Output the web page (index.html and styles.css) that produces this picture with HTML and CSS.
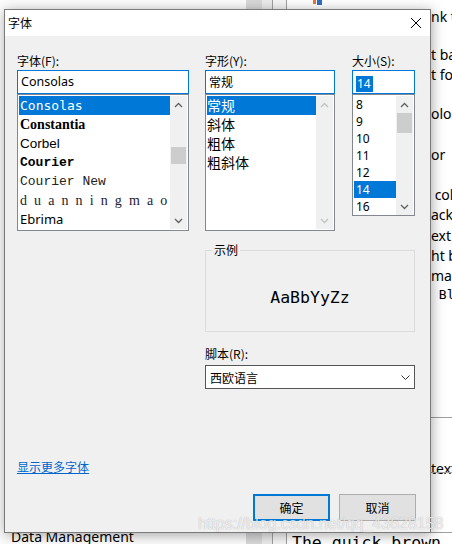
FILE: index.html
```html
<!DOCTYPE html>
<html lang="zh-CN">
<head>
<meta charset="utf-8">
<title>字体</title>
<link rel="stylesheet" href="styles.css">
</head>
<body>
<div class="desktop">
  <div class="app-left">
    <div class="tree-top">Label Decorations</div>
    <div class="tree-bottom">Data Management</div>
  </div>
  <div class="app-scroll"></div>
  <div class="app-gap"></div>
  <div class="app-mid"></div>
  <div class="app-right">
    <svg class="app-icon" width="12" height="5" viewBox="0 0 12 5"><rect x="0" y="0" width="3" height="4" fill="#e8782c"/><rect x="4" y="0" width="5" height="5" fill="#2f6fc4"/></svg>
    <div class="prop mt2">nk text color</div>
    <div class="prop mt18">t background</div>
    <div class="prop">t foreground</div>
    <div class="prop mt19">olor</div>
    <div class="prop mt21">or</div>
    <div class="prop mt20"> color</div>
    <div class="prop">ackground</div>
    <div class="prop mt1">ext color</div>
    <div class="prop">ht background</div>
    <div class="prop">matting</div>
    <div class="prop mono mtm1"> Block</div>
    <div class="rule-box">
      <div class="prop">text</div>
    </div>
    <div class="rule-box short"></div>
    <div class="preview">The quick brown fox</div>
  </div>
</div>

<div class="dialog">
  <div class="titlebar">
    <span class="title">字体</span>
    <svg class="close" width="12" height="12" viewBox="0 0 12 12"><path d="M1 1L11 11M11 1L1 11" stroke="#000" stroke-width="1" fill="none"/></svg>
  </div>
  <div class="dlg-body">
    <div class="grid">
      <div class="lbl col1">字体(F):</div>
      <div class="lbl col2">字形(Y):</div>
      <div class="lbl col3">大小(S):</div>

      <div class="input col1 latin">Consolas</div>
      <div class="input col2">常规</div>
      <div class="input col3"><span class="hl">14</span></div>

      <div class="list list-font col1">
        <div class="items">
          <div class="item sel f-consolas">Consolas</div>
          <div class="item f-constantia">Constantia</div>
          <div class="item f-corbel">Corbel</div>
          <div class="item f-courier">Courier</div>
          <div class="item f-couriernew">Courier New</div>
          <div class="item f-spaced">duanningmao</div>
          <div class="item f-ebrima">Ebrima</div>
        </div>
        <div class="vscroll">
          <div class="sb-btn"><svg class="chev" width="9" height="6" viewBox="0 0 9 6"><path d="M1 5L4.5 1.5L8 5"/></svg></div>
          <div class="sb-track"><div class="sb-thumb thumb-font"></div></div>
          <div class="sb-btn"><svg class="chev" width="9" height="6" viewBox="0 0 9 6"><path d="M1 1L4.5 4.5L8 1"/></svg></div>
        </div>
      </div>

      <div class="list list-style col2">
        <div class="items">
          <div class="item sel cjk">常规</div>
          <div class="item cjk">斜体</div>
          <div class="item cjk">粗体</div>
          <div class="item cjk">粗斜体</div>
        </div>
        <div class="vscroll">
          <div class="sb-btn"><svg class="chev off" width="9" height="6" viewBox="0 0 9 6"><path d="M1 5L4.5 1.5L8 5"/></svg></div>
          <div class="sb-track"></div>
          <div class="sb-btn"><svg class="chev off" width="9" height="6" viewBox="0 0 9 6"><path d="M1 1L4.5 4.5L8 1"/></svg></div>
        </div>
      </div>

      <div class="list list-size col3">
        <div class="items">
          <div class="item num">8</div>
          <div class="item num">9</div>
          <div class="item num">10</div>
          <div class="item num">11</div>
          <div class="item num">12</div>
          <div class="item num sel">14</div>
          <div class="item num">16</div>
        </div>
        <div class="vscroll">
          <div class="sb-btn"><svg class="chev" width="9" height="6" viewBox="0 0 9 6"><path d="M1 5L4.5 1.5L8 5"/></svg></div>
          <div class="sb-track"><div class="sb-thumb thumb-size"></div></div>
          <div class="sb-btn"><svg class="chev" width="9" height="6" viewBox="0 0 9 6"><path d="M1 1L4.5 4.5L8 1"/></svg></div>
        </div>
      </div>

      <div class="sample">
        <span class="sample-label">示例</span>
        <div class="sample-text">AaBbYyZz</div>
      </div>

      <div class="lbl script-lbl">脚本(R):</div>
      <div class="select">
        <span>西欧语言</span>
        <svg class="drop" width="9" height="5" viewBox="0 0 9 5"><path d="M0.5 0.5L4.5 4.5L8.5 0.5"/></svg>
      </div>
    </div>

    <a class="more" href="#">显示更多字体</a>

    <div class="buttons">
      <button class="btn btn-ok">确定</button>
      <button class="btn">取消</button>
    </div>
  </div>
</div>

<div class="watermark">https://blog.csdn.net/qq_43628158</div>
</body>
</html>
```

FILE: styles.css
```css
* { box-sizing: border-box; }
html, body { margin: 0; padding: 0; }
body {
  width: 452px;
  height: 544px;
  overflow: hidden;
  position: relative;
  background: #fff;
  color: #000;
  font-family: "Noto Sans", "Noto Sans CJK SC", sans-serif;
}

/* ---------- background application ---------- */
.desktop { display: flex; height: 544px; }
.app-left {
  width: 246px;
  background: #fcfcfc;
  display: flex;
  flex-direction: column;
  justify-content: space-between;
  font-size: 14px;
  line-height: 18px;
  white-space: nowrap;
  overflow: hidden;
}
.tree-top { margin-top: -14px; padding-left: 49px; }
.tree-bottom { margin-bottom: -2px; padding-left: 11px; }
.app-scroll { width: 16px; background: #d9d9d9; }
.app-gap { width: 10px; background: #ececec; }
.app-mid {
  width: 15px;
  border-left: 1px solid #a0a0a0;
  border-right: 1px solid #a0a0a0;
  background: #f5f5f5;
}
.app-right {
  flex: 1;
  background: #fff;
  overflow: hidden;
  white-space: pre;
  font-size: 14px;
  line-height: 20px;
  display: flex;
  flex-direction: column;
}
.app-icon { display: block; flex: none; margin-left: 26px; }
.prop { padding-left: 144px; flex: none; }
.prop.mono { font-family: "DejaVu Sans Mono", monospace; font-size: 13px; }
.mt1 { margin-top: 1px; }
.mt2 { margin-top: 2px; }
.mt18 { margin-top: 18px; }
.mt19 { margin-top: 19px; }
.mt20 { margin-top: 20px; }
.mt21 { margin-top: 21px; }
.mtm1 { margin-top: -1px; }
.rule-box {
  flex: none;
  margin-top: 112px;
  border-top: 1px solid #a0a0a0;
  height: 55px;
  padding-top: 1px;
}
.rule-box.short { margin-top: 0; height: 34px; }
.preview {
  flex: none;
  margin-top: 26px;
  padding-left: 5px;
  font-family: "DejaVu Sans Mono", monospace;
  font-size: 16.5px;
  line-height: 20px;
  border-top: 1px solid #a0a0a0;
}

/* ---------- dialog ---------- */
.dialog {
  position: absolute;
  left: 4px;
  top: 9px;
  width: 427px;
  height: 524px;
  border: 1px solid #7a7a7a;
  background: #f0f0f0;
  box-shadow: 1px 2px 12px rgba(0, 0, 0, 0.35);
  display: flex;
  flex-direction: column;
  font-family: "Noto Sans CJK SC", sans-serif;
  font-size: 12px;
}
.titlebar {
  flex: none;
  height: 26px;
  background: #fff;
  display: flex;
  align-items: center;
  justify-content: space-between;
  padding: 0 8px 0 3px;
}
.title { line-height: 16px; }
.close { display: block; }

.dlg-body { flex: 1; padding: 17px 14px 0 12px; }
.grid {
  display: grid;
  grid-template-columns: 172px 16px 130px 17px 63px;
  align-items: start;
}
.col1 { grid-column: 1; }
.col2 { grid-column: 3; }
.col3 { grid-column: 5; }

.lbl { line-height: 16px; margin-bottom: 1px; white-space: nowrap; }

.input {
  height: 24px;
  border: 1px solid #0078d7;
  background: #fff;
  padding-left: 3px;
  line-height: 22px;
  white-space: nowrap;
}
.input.latin { font-family: "Noto Sans", sans-serif; font-size: 12.5px; }
.hl {
  display: inline-block;
  background: #0078d7;
  color: #fff;
  line-height: 16px;
  padding: 0 2px 0 1px;
  font-family: "Noto Sans", sans-serif;
  vertical-align: middle;
}

.list {
  display: flex;
  border: 1px solid #828790;
  background: #fff;
  padding: 1px;
  overflow: hidden;
}
.list-font { height: 137px; }
.list-style { height: 137px; }
.list-size { height: 122px; padding-bottom: 0; }
.items { flex: 1; min-width: 0; }
.item {
  height: 19px;
  line-height: 19px;
  padding-left: 1px;
  white-space: nowrap;
  overflow: hidden;
}
.item.sel { background: #0078d7; color: #fff; }
.f-consolas { font-family: "DejaVu Sans Mono", monospace; font-size: 13px; }
.f-constantia { font-family: "Liberation Serif", serif; font-weight: bold; font-size: 14px; }
.f-corbel { font-family: "Liberation Sans", sans-serif; font-size: 13.5px; }
.f-courier { font-family: "Liberation Mono", monospace; font-weight: bold; font-size: 13px; }
.f-couriernew { font-family: "Liberation Mono", monospace; font-size: 13px; color: #222; }
.f-spaced { font-family: "Liberation Serif", serif; font-size: 14px; letter-spacing: 7.1px; color: #223; }
.f-ebrima { font-family: "Noto Sans", sans-serif; font-size: 13px; }
.item.cjk { padding-left: 0; font-size: 14px; }
.item.num {
  height: 17px;
  line-height: 17px;
  padding-left: 2px;
  font-family: "Noto Sans", sans-serif;
  font-size: 12px;
}

.vscroll {
  width: 17px;
  flex: none;
  background: #f0f0f0;
  display: flex;
  flex-direction: column;
}
.sb-btn {
  height: 17px;
  flex: none;
  display: flex;
  align-items: center;
  justify-content: center;
}
.chev { display: block; fill: none; stroke: #606060; stroke-width: 1.3; }
.chev.off { stroke: #c2c2c2; }
.sb-track { flex: 1; }
.sb-thumb { margin-left: 1px; width: 15px; background: #cdcdcd; }
.thumb-font { margin-top: 34px; height: 17px; }
.thumb-size { margin-top: 0; height: 20px; }

.sample {
  grid-column: 3 / 6;
  position: relative;
  margin-top: 19px;
  height: 82px;
  border: 1px solid #dcdcdc;
  display: flex;
  align-items: center;
  justify-content: center;
  padding-top: 14px;
}
.sample-label {
  position: absolute;
  left: 6px;
  top: -9px;
  padding: 0 2px;
  line-height: 16px;
  background: #f0f0f0;
}
.sample-text {
  font-family: "DejaVu Sans Mono", monospace;
  font-size: 16.5px;
  line-height: 20px;
}

.script-lbl { grid-column: 3 / 6; margin-top: 14px; margin-bottom: 3px; }
.select {
  grid-column: 3 / 6;
  height: 24px;
  border: 1px solid #555;
  background: #fff;
  display: flex;
  align-items: center;
  justify-content: space-between;
  padding: 0 4px 0 4px;
}
.drop { display: block; fill: none; stroke: #333; stroke-width: 1; }

.more {
  display: block;
  width: max-content;
  margin-top: 70px;
  line-height: 16px;
  color: #0066cc;
  text-decoration: underline;
}

.buttons {
  display: flex;
  justify-content: flex-end;
  gap: 9px;
  margin-top: 19px;
}
.btn {
  width: 77px;
  height: 27px;
  border: 1px solid #adadad;
  background: #e1e1e1;
  font-family: "Noto Sans CJK SC", sans-serif;
  font-size: 12px;
  color: #000;
  padding: 0;
  margin: 0;
}
.btn-ok { border: 2px solid #0078d7; }

/* ---------- watermark ---------- */
.watermark {
  position: absolute;
  left: 198px;
  top: 514px;
  font-family: "Liberation Sans", sans-serif;
  font-size: 16px;
  line-height: 20px;
  color: rgba(255, 255, 255, 0.75);
  text-shadow: 0 0 1px rgba(0, 0, 0, 0.3);
  white-space: nowrap;
}
```
